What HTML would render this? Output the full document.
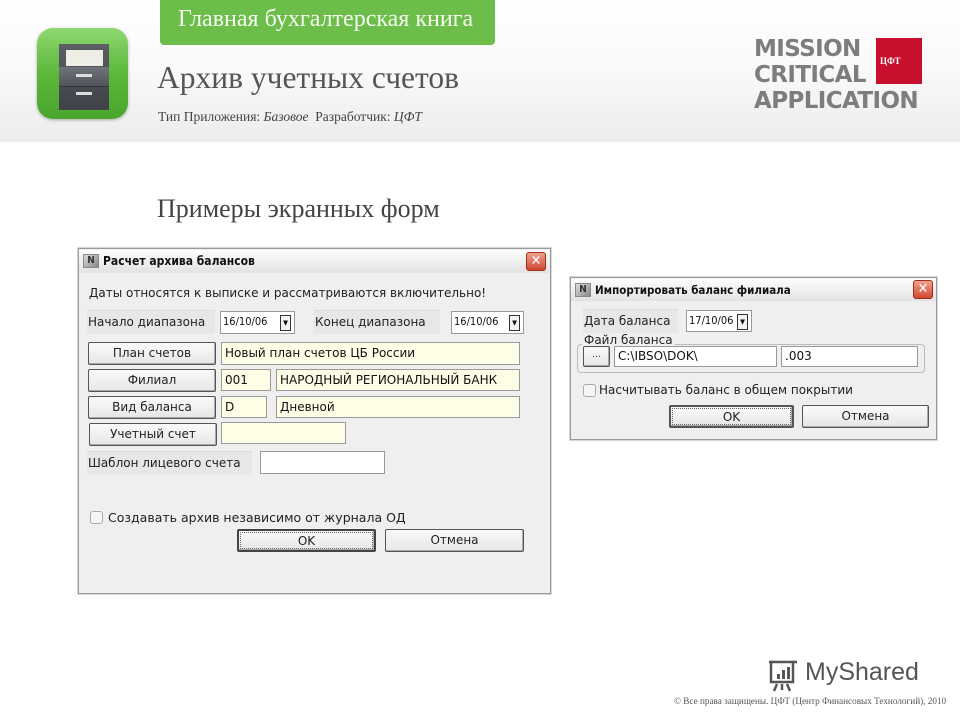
<!DOCTYPE html>
<html><head><meta charset="utf-8">
<style>
*{margin:0;padding:0;box-sizing:border-box}
body{width:960px;height:720px;position:relative;background:#fff;overflow:hidden;font-family:"Liberation Sans","DejaVu Sans",sans-serif}
.a{position:absolute}
.hdr{left:0;top:0;width:960px;height:142px;background:linear-gradient(#fff 0%,#f9f9f9 50%,#ececec 100%)}
.serif{font-family:"Liberation Serif","DejaVu Serif",serif}
.dlg{background:#efefef;border:1px solid #9a9a9a;box-shadow:0 0 0 1px #d8d8d8}
.tb{background:linear-gradient(#fdfdfd,#e2e2e2);font-weight:bold;font-size:12px;color:#111;padding-left:24px;line-height:22px;font-family:"DejaVu Sans Condensed","DejaVu Sans",sans-serif}
.ic{position:absolute;left:4px;top:4px;width:16px;height:14px;border:1px solid #888;background:linear-gradient(135deg,#ddd,#888);font-size:10px;line-height:12px;text-align:center;color:#333}
.x{position:absolute;width:20px;height:19px;border-radius:3px;background:linear-gradient(#f0a090,#d04830);border:1px solid #a03020;color:#fff;font-size:14px;line-height:17px;text-align:center;font-weight:bold}
.t{font-size:12px;color:#222;white-space:nowrap;font-family:"DejaVu Sans","Liberation Sans",sans-serif}
.lbl{background:#e7e7e7;border-top:1px solid #ddd;font-size:12px;color:#222;line-height:22px;padding-left:1px;white-space:nowrap;font-family:"DejaVu Sans",sans-serif}
.in{background:#fff;border:1px solid #999;font-size:12px;line-height:20px;padding-left:3px;color:#111;white-space:nowrap;font-family:"DejaVu Sans",sans-serif;overflow:hidden}
.dt{font-size:11px;padding-left:2px;font-family:"DejaVu Sans Condensed","DejaVu Sans",sans-serif}
.y{background:#fefde6}
.btn{background:linear-gradient(#fafafa,#e6e6e6);border:1px solid #555;border-radius:2px;box-shadow:inset -1px -1px 0 #aaa;font-size:12px;text-align:center;color:#222;font-family:"DejaVu Sans",sans-serif}
.dd{position:absolute;right:3px;top:3px;width:11px;height:16px;border:1px solid #333;background:#f4f4f4;font-size:7px;line-height:14px;text-align:center}
.cb{width:13px;height:13px;border:1px solid #aaa;border-radius:3px;background:#f6f6f6}
</style></head><body>
<div class="a hdr"></div>
<div class="a" style="left:160px;top:0;width:335px;height:45px;background:#6cbd4a;border-radius:0 0 4px 4px"></div>
<div class="a serif" style="left:178px;top:6px;font-size:24px;color:#f4fbef;white-space:nowrap">Главная бухгалтерская книга</div>
<!-- app icon -->
<div class="a" style="left:37px;top:28px;width:91px;height:91px;border-radius:16px;background:linear-gradient(#8fd870,#5bb83a 50%,#4aa62c);box-shadow:0 1px 3px rgba(0,0,0,.3)"></div>
<div class="a" style="left:59px;top:44px;width:50px;height:66px;background:linear-gradient(#5a5f66,#3d4248);"></div>
<div class="a" style="left:66px;top:50px;width:37px;height:16px;background:#eeeee4"></div>
<div class="a" style="left:59px;top:67px;width:50px;height:20px;background:linear-gradient(#6f747b,#50555c);border-bottom:1px solid #333"></div>
<div class="a" style="left:76px;top:74px;width:16px;height:3px;background:#ddd"></div>
<div class="a" style="left:76px;top:92px;width:16px;height:3px;background:#ddd"></div>
<div class="a serif" style="left:157px;top:60px;font-size:31.5px;color:#555;white-space:nowrap">Архив учетных счетов</div>
<div class="a serif" style="left:158px;top:109px;font-size:13.5px;color:#444;white-space:nowrap">Тип Приложения: <i>Базовое</i> &nbsp;Разработчик: <i>ЦФТ</i></div>
<!-- logo -->
<div class="a" style="left:754px;top:36px;font-size:23px;line-height:26px;font-weight:bold;color:#7d7d7d;letter-spacing:-0.6px;font-family:'DejaVu Sans',sans-serif">MISSION<br>CRITICAL<br>APPLICATION</div>
<div class="a" style="left:876px;top:38px;width:46px;height:46px;background:#c8102e;color:#fff;font-size:9px;line-height:46px;padding-left:4px;font-family:'Liberation Serif',serif;font-weight:bold">ЦФТ</div>
<div class="a serif" style="left:157px;top:194px;font-size:26px;color:#444;white-space:nowrap">Примеры экранных форм</div>

<!-- dialog 1 -->
<div class="a dlg" style="left:78px;top:248px;width:473px;height:346px"></div>
<div class="a tb" style="left:79px;top:250px;width:470px;height:23px">Расчет архива балансов<div class="ic">N</div><div class="x" style="right:3px;top:2px">✕</div></div>
<div class="a t" style="left:89px;top:286px">Даты относятся к выписке и рассматриваются включительно!</div>
<div class="a lbl" style="left:87px;top:310px;width:128px;height:24px">Начало диапазона</div>
<div class="a in dt" style="left:220px;top:311px;width:75px;height:23px">16/10/06<div class="dd">▼</div></div>
<div class="a lbl" style="left:314px;top:310px;width:126px;height:24px">Конец диапазона</div>
<div class="a in dt" style="left:451px;top:311px;width:73px;height:23px">16/10/06<div class="dd">▼</div></div>
<div class="a btn" style="left:88px;top:342px;width:128px;height:23px;line-height:21px">План счетов</div>
<div class="a in y" style="left:221px;top:342px;width:299px;height:23px">Новый план счетов ЦБ России</div>
<div class="a btn" style="left:88px;top:369px;width:128px;height:23px;line-height:21px">Филиал</div>
<div class="a in y" style="left:221px;top:369px;width:50px;height:22px">001</div>
<div class="a in y" style="left:276px;top:369px;width:244px;height:22px">НАРОДНЫЙ РЕГИОНАЛЬНЫЙ БАНК</div>
<div class="a btn" style="left:88px;top:396px;width:128px;height:23px;line-height:21px">Вид баланса</div>
<div class="a in y" style="left:221px;top:396px;width:46px;height:22px">D</div>
<div class="a in y" style="left:276px;top:396px;width:244px;height:22px">Дневной</div>
<div class="a btn" style="left:89px;top:423px;width:128px;height:23px;line-height:21px">Учетный счет</div>
<div class="a in y" style="left:221px;top:422px;width:125px;height:22px"></div>
<div class="a lbl" style="left:87px;top:451px;width:165px;height:24px">Шаблон лицевого счета</div>
<div class="a in" style="left:260px;top:451px;width:125px;height:23px"></div>
<div class="a cb" style="left:90px;top:511px"></div>
<div class="a t" style="left:108px;top:510px;font-size:12.5px">Создавать архив независимо от журнала ОД</div>
<div class="a btn" style="left:237px;top:529px;width:139px;height:23px;line-height:21px;border:2px solid #444;outline:1px dotted #666;outline-offset:-4px">OK</div>
<div class="a btn" style="left:385px;top:529px;width:139px;height:23px;line-height:21px">Отмена</div>

<!-- dialog 2 -->
<div class="a dlg" style="left:570px;top:277px;width:367px;height:163px"></div>
<div class="a tb" style="left:571px;top:279px;width:365px;height:22px;font-size:11.5px">Импортировать баланс филиала<div class="ic">N</div><div class="x" style="right:3px;top:1px">✕</div></div>
<div class="a lbl" style="left:583px;top:309px;width:95px;height:24px">Дата баланса</div>
<div class="a in dt" style="left:686px;top:310px;width:66px;height:22px">17/10/06<div class="dd">▼</div></div>
<div class="a" style="left:577px;top:344px;width:348px;height:29px;border:1px solid #bbb;border-radius:4px"></div>
<div class="a t" style="left:582px;top:333px;background:#efefef;padding:0 2px">Файл баланса</div>
<div class="a btn" style="left:583px;top:346px;width:27px;height:21px;line-height:17px;font-size:9px">...</div>
<div class="a in" style="left:614px;top:346px;width:163px;height:21px;line-height:18px">C:\IBSO\DOK\</div>
<div class="a in" style="left:781px;top:346px;width:137px;height:21px;line-height:18px">.003</div>
<div class="a cb" style="left:583px;top:384px"></div>
<div class="a t" style="left:599px;top:383px">Насчитывать баланс в общем покрытии</div>
<div class="a btn" style="left:669px;top:405px;width:125px;height:23px;line-height:20px;border:2px solid #555;outline:1px dotted #666;outline-offset:-4px">OK</div>
<div class="a btn" style="left:802px;top:405px;width:127px;height:23px;line-height:21px">Отмена</div>

<!-- footer -->
<svg class="a" style="left:767px;top:658px" width="34" height="34" viewBox="0 0 34 34"><g fill="none" stroke="#555" stroke-width="2.5"><path d="M4 4h22v20H4z"/><path d="M2 4h4M26 4h4"/><path d="M10 26l-3 7M20 26l3 7M15 26v6"/></g><rect x="10" y="16" width="3" height="5" fill="#555"/><rect x="15" y="12" width="3" height="9" fill="#555"/><rect x="20" y="9" width="3" height="12" fill="#555"/></svg>
<div class="a" style="left:805px;top:658px;font-size:25px;color:#555;white-space:nowrap">MyShared</div>
<div class="a serif" style="left:674px;top:696px;font-size:9.2px;color:#555;white-space:nowrap">© Все права защищены. ЦФТ (Центр Финансовых Технологий), 2010</div>
</body></html>
